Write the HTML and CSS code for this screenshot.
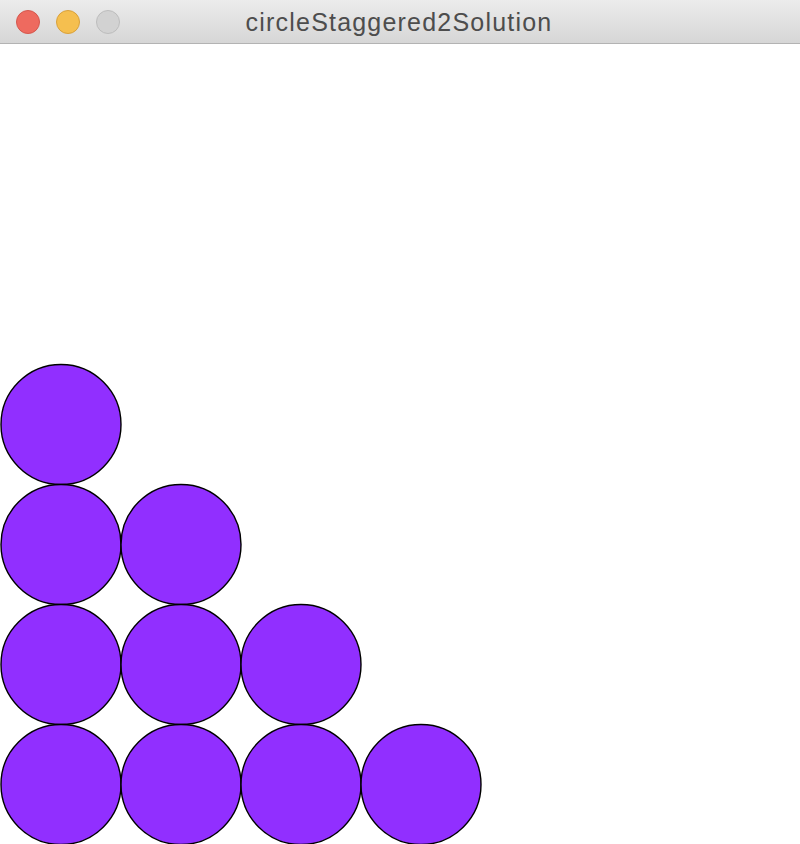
FILE: index.html
```html
<!DOCTYPE html>
<html>
<head>
<meta charset="utf-8">
<link rel="stylesheet" href="styles.css">
</head>
<body>
<div class="window">
  <div class="titlebar">
    <div class="lights">
      <span class="light red"></span>
      <span class="light yellow"></span>
      <span class="light gray"></span>
    </div>
    <div class="title">circleStaggered2Solution</div>
  </div>
  <svg class="canvas" width="800" height="800" viewBox="0 0 800 800">
    <g fill="#912fff" stroke="#000" stroke-width="1.4">
      <circle cx="61" cy="380.5" r="60"/>
      <circle cx="61" cy="500.5" r="60"/>
      <circle cx="181" cy="500.5" r="60"/>
      <circle cx="61" cy="620.5" r="60"/>
      <circle cx="181" cy="620.5" r="60"/>
      <circle cx="301" cy="620.5" r="60"/>
      <circle cx="61" cy="740.5" r="60"/>
      <circle cx="181" cy="740.5" r="60"/>
      <circle cx="301" cy="740.5" r="60"/>
      <circle cx="421" cy="740.5" r="60"/>
    </g>
  </svg>
</div>
</body>
</html>
```
FILE: styles.css
```css
html, body {
  margin: 0;
  padding: 0;
  background: #ffffff;
  overflow: hidden;
}
.window {
  width: 800px;
  height: 844px;
  display: flex;
  flex-direction: column;
}
.titlebar {
  height: 43px;
  flex: 0 0 43px;
  border-bottom: 1px solid #b3b3b3;
  background: linear-gradient(#ececec, #d6d6d6);
  position: relative;
  display: flex;
  align-items: center;
  justify-content: center;
}
.lights {
  position: absolute;
  left: 16px;
  top: 10px;
  display: flex;
  gap: 16px;
}
.light {
  width: 24px;
  height: 24px;
  border-radius: 50%;
  box-sizing: border-box;
  border: 1px solid;
}
.red { background: #ee6a5f; border-color: #d5574d; }
.yellow { background: #f5bf4f; border-color: #d9a13b; }
.gray { background: #d2d2d2; border-color: #bdbdbd; }
.title {
  font-family: "Liberation Sans", Arial, sans-serif;
  font-size: 25px;
  letter-spacing: 1.2px;
  color: #4d4d4d;
  margin-top: 1px;
  margin-right: 2px;
}
.canvas {
  display: block;
  flex: 0 0 800px;
}
```
